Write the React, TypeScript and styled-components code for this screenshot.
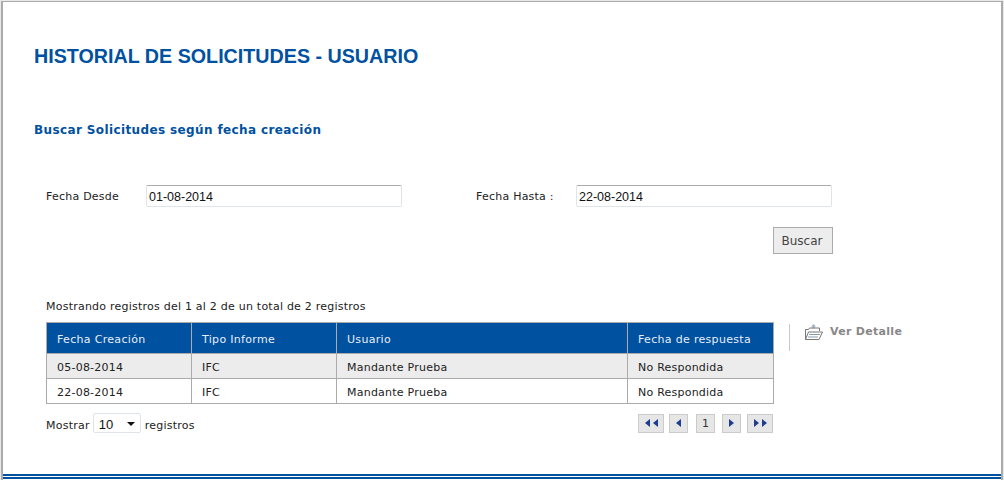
import React from "react";
import styled, { createGlobalStyle } from "styled-components";

const Global = createGlobalStyle`
  html, body { margin: 0; padding: 0; background: #e9e9e9; }
  body { width: 1004px; height: 480px; overflow: hidden; }
`;
const Frame = styled.div`
  box-sizing: border-box; width: 1002px; height: 480px; background: #fff;
  margin-top: 1px; margin-left: 1px; border-top: 1px solid #ababab; border-left: 2px solid #ababab; border-right: 2px solid #ababab;
  display: flex; flex-direction: column; font-family: "DejaVu Sans", Verdana, sans-serif; font-size: 11px; letter-spacing: 0.23px; color: #222;
`;
const Content = styled.div`
  flex: none; height: 472px; box-sizing: border-box; padding: 42px 0 0 31px;
`;
const Title = styled.h1`
  margin: 0; font: bold 19.7px/24px "Liberation Sans", Arial, sans-serif; letter-spacing: 0; color: #00519f; 
`;
const Subtitle = styled.h2`
  margin: 54px 0 0; font: bold 12px/16px "DejaVu Sans", Verdana, sans-serif; letter-spacing: 0.38px; color: #00519f;
`;
const Form = styled.div`
  margin: 47px 0 0 12px; display: flex; align-items: center; height: 22px;
`;
const FieldLabel = styled.label<{ $w: number }>`
  width: ${p => p.$w}px; flex: none; line-height: 22px; padding-top: 2px; color: #222;
`;
const Input = styled.div<{ $after?: number }>`
  box-sizing: border-box; width: 256px; height: 22px; flex: none; margin-right: ${p => p.$after ?? 0}px;
  border: 1px solid #dfe3ea; border-top-color: #ababab; border-radius: 2px; padding-left: 2px;
  font: 12.5px/22px "Liberation Sans", Arial, sans-serif; letter-spacing: 0; color: #111;
`;
const ButtonRow = styled.div`
  margin: 20px 0 0; width: 799px; display: flex; justify-content: flex-end;
`;
const Button = styled.button`
  box-sizing: border-box; width: 60px; height: 27px; padding: 0 2px 0 0; background: #ededed; border: 1px solid #ababab; border-radius: 0;
  font: 12px "DejaVu Sans", Verdana, sans-serif; color: #444;
`;
const Info = styled.p`
  margin: 45px 0 0 12px; line-height: 16px; color: #222;
`;
const TableRow = styled.div`
  margin: 7px 0 0 12px; display: flex; align-items: flex-start;
`;
const Table = styled.table`
  width: 728px; border-collapse: collapse; table-layout: fixed; flex: none; font-size: 11px;
`;
const HeadCell = styled.th<{ $w: number }>`
  width: ${p => p.$w}px; height: 31px; padding: 3px 0 0 10px; box-sizing: border-box; text-align: left; font-weight: normal; letter-spacing: 0.32px;
  background: #00519f; color: #e8eef6; border: 1px solid #ababab;
`;
const Row = styled.tr<{ $alt?: boolean }>`
  background: ${p => (p.$alt ? "#ececec" : "#fff")};
`;
const Cell = styled.td`
  height: 25px; padding: 2px 0 0 10px; box-sizing: border-box; border: 1px solid #ababab; color: #222;
`;
const Side = styled.div`
  margin: 2px 0 0 15px; height: 27px; padding-left: 15px; border-left: 1px solid #c8c8c8; display: flex; align-items: flex-start; gap: 7px;
`;
const DetailLink = styled.span`
  font-weight: bold; font-size: 11px; line-height: 14px; letter-spacing: 0.3px; color: #888; margin-top: 1px;
`;
const Footer = styled.div`
  margin: 9px 0 0 12px; width: 727px; height: 20px; display: flex; align-items: center;
`;
const FooterText = styled.span`
  color: #222; padding-top: 4px;
`;
const PageSize = styled.div`
  box-sizing: border-box; width: 48px; height: 20px; margin: 0 4px 0 3px; padding: 2px 5px 0; display: flex; align-items: center; justify-content: space-between;
  border: 1px solid #dfe3ea; border-radius: 2px; font: 13px "Liberation Sans", Arial, sans-serif; letter-spacing: 0; color: #111;
`;
const Caret = styled.span`
  width: 0; height: 0; border-left: 4px solid transparent; border-right: 4px solid transparent; border-top: 4px solid #111;
`;
const Pager = styled.div`
  margin-left: auto; display: flex; align-items: center;
`;
const PageBtn = styled.div<{ $w: number; $ml?: number }>`
  box-sizing: border-box; width: ${p => p.$w}px; height: 19px; margin-left: ${p => p.$ml ?? 0}px;
  background: #e6e6e6; border: 1px solid #cbcbcb; display: flex; align-items: center; justify-content: center; gap: 3px;
  font-size: 11px; color: #333;
`;
const Tri = styled.span<{ $dir: "l" | "r" }>`
  width: 0; height: 0; border-top: 4px solid transparent; border-bottom: 4px solid transparent;
  ${p => (p.$dir === "l" ? "border-right: 5px solid #1f3d8f;" : "border-left: 5px solid #1f3d8f;")}
`;
const Bottom = styled.div`
  flex: none; height: 2px; background: #00519f; margin-bottom: 1px;
`;

const FolderIcon = () => (
  <svg width="18" height="17" viewBox="0 0 18 17" fill="none" style={{ flex: "none" }}>
    <path d="M8.5 0l-2.5 2.5h5zM7.5 2.5h2v2h-2z" fill="#9db4c2" />
    <path d="M0.5 15.5V5.5h3l1-1.5h10v3" stroke="#777" strokeWidth="1" />
    <path d="M0.5 15.5l3-7.5h14l-3.5 7.5z" fill="#fff" stroke="#777" strokeWidth="1" />
    <path d="M4 10.5h11M3 13h10" stroke="#8a9aa8" strokeWidth="1" />
  </svg>
);

export default function App() {
  return (
    <>
      <Global />
      <Frame>
        <Content>
          <Title>HISTORIAL DE SOLICITUDES - USUARIO</Title>
          <Subtitle>Buscar Solicitudes según fecha creación</Subtitle>
          <Form>
            <FieldLabel $w={100}>Fecha Desde</FieldLabel>
            <Input $after={74}>01-08-2014</Input>
            <FieldLabel $w={100}>Fecha Hasta :</FieldLabel>
            <Input>22-08-2014</Input>
          </Form>
          <ButtonRow><Button>Buscar</Button></ButtonRow>
          <Info>Mostrando registros del 1 al 2 de un total de 2 registros</Info>
          <TableRow>
            <Table>
              <thead>
                <tr>
                  <HeadCell $w={145}>Fecha Creación</HeadCell>
                  <HeadCell $w={145}>Tipo Informe</HeadCell>
                  <HeadCell $w={291}>Usuario</HeadCell>
                  <HeadCell $w={146}>Fecha de respuesta</HeadCell>
                </tr>
              </thead>
              <tbody>
                <Row $alt>
                  <Cell>05-08-2014</Cell><Cell>IFC</Cell><Cell>Mandante Prueba</Cell><Cell>No Respondida</Cell>
                </Row>
                <Row>
                  <Cell>22-08-2014</Cell><Cell>IFC</Cell><Cell>Mandante Prueba</Cell><Cell>No Respondida</Cell>
                </Row>
              </tbody>
            </Table>
            <Side>
              <FolderIcon />
              <DetailLink>Ver Detalle</DetailLink>
            </Side>
          </TableRow>
          <Footer>
            <FooterText>Mostrar</FooterText>
            <PageSize>10<Caret /></PageSize>
            <FooterText>registros</FooterText>
            <Pager>
              <PageBtn $w={26}><Tri $dir="l" /><Tri $dir="l" /></PageBtn>
              <PageBtn $w={19} $ml={5}><Tri $dir="l" /></PageBtn>
              <PageBtn $w={19} $ml={8}>1</PageBtn>
              <PageBtn $w={19} $ml={7}><Tri $dir="r" /></PageBtn>
              <PageBtn $w={26} $ml={6}><Tri $dir="r" /><Tri $dir="r" /></PageBtn>
            </Pager>
          </Footer>
        </Content>
        <Bottom />
        <Bottom />
      </Frame>
    </>
  );
}
